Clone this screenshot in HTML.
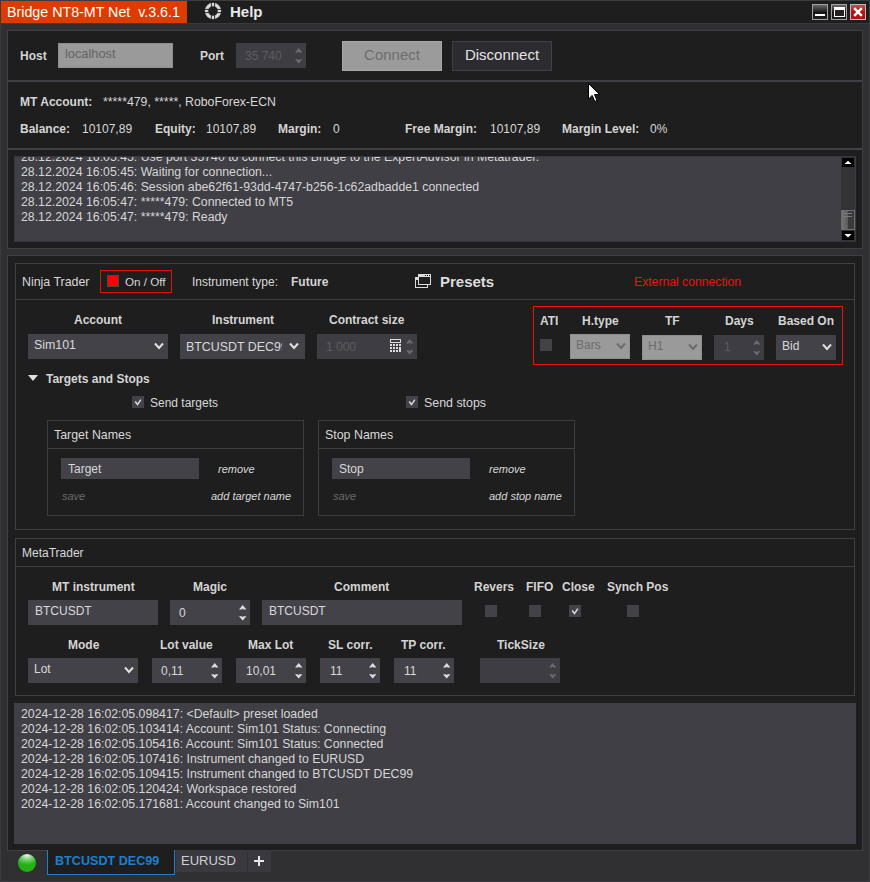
<!DOCTYPE html>
<html><head><meta charset="utf-8">
<style>
*{box-sizing:border-box;margin:0;padding:0}
html,body{width:870px;height:882px;overflow:hidden}
body{position:relative;background:#303033;font-family:"Liberation Sans",sans-serif;font-size:12px;color:#d8d8d8}
.a{position:absolute}
.t{position:absolute;white-space:pre;line-height:14px}
.b{font-weight:bold;color:#d4d4d4}
.box{position:absolute;border:1px solid #404044;background:#1e1e1e}
.hl{position:absolute;height:1px;background:#404044}
.inp{position:absolute;background:#434249}
.dis{position:absolute;background:#9a9a9a;border:1px solid #8e8e8e}
.dspin{position:absolute;background:#3e3d43}
.log{position:absolute;background:#403f45;color:#d6d6d6;font-size:12.3px}
.log .l{height:15px;line-height:15px;white-space:pre}
.cb{position:absolute;width:12px;height:12px;background:#434249}
.it{font-style:italic;font-size:11px}
svg{position:absolute;overflow:visible}
</style></head><body>
<!-- window border -->
<div class="a" style="left:0;top:0;width:870px;height:882px;border:1px solid #3c3c40"></div>
<!-- title bar -->
<div class="a" style="left:1px;top:1px;width:868px;height:22px;background:#1e1e1e"></div>
<div class="a" style="left:1px;top:1px;width:186px;height:22px;background:#dd3b00"></div>
<div class="a" style="left:1px;top:23px;width:868px;height:1px;background:#3a3a3e"></div>
<div class="t" style="left:7px;top:4px;font-size:14.25px;line-height:16px;color:#fff">Bridge NT8-MT Net  v.3.6.1</div>
<svg style="left:204px;top:2px" width="18" height="18" viewBox="0 0 18 18">
 <circle cx="9" cy="9" r="6.5" fill="none" stroke="#d8d8d8" stroke-width="3.4"/>
 <g stroke="#1e1e1e" stroke-width="0.9"><line x1="7.4" y1="0" x2="7.4" y2="5"/><line x1="10.6" y1="0" x2="10.6" y2="5"/><line x1="7.4" y1="13" x2="7.4" y2="18"/><line x1="10.6" y1="13" x2="10.6" y2="18"/><line x1="0" y1="7.4" x2="5" y2="7.4"/><line x1="0" y1="10.6" x2="5" y2="10.6"/><line x1="13" y1="7.4" x2="18" y2="7.4"/><line x1="13" y1="10.6" x2="18" y2="10.6"/></g>
</svg>
<div class="t b" style="left:230px;top:4px;font-size:15px;line-height:16px;color:#e8e8e8">Help</div>
<!-- window controls -->
<div class="a" style="left:812px;top:4px;width:16px;height:16px;border:1px solid #a0a0a0;background:linear-gradient(#6a6a6a,#141212 55%,#221e1f)"><div class="a" style="left:2px;top:9px;width:10px;height:2px;background:#fff"></div></div>
<div class="a" style="left:831px;top:4px;width:16px;height:16px;border:1px solid #a0a0a0;background:linear-gradient(#6a6a6a,#141212 55%,#221e1f)"><div class="a" style="left:2px;top:2px;width:11px;height:10px;border:1px solid #fff;border-top-width:3px;background:#231f20"></div></div>
<div class="a" style="left:850px;top:4px;width:16px;height:16px;border:1px solid #b8b8b8;background:linear-gradient(#c85050,#b01818 45%,#a81414)">
 <svg style="left:1px;top:1px" width="12" height="12" viewBox="0 0 12 12"><path d="M2.2 2.2L9.8 9.8M9.8 2.2L2.2 9.8" stroke="#fff" stroke-width="2.4"/></svg></div>

<!-- panel 1 connection -->
<div class="box" style="left:7px;top:30px;width:856px;height:119px"></div>
<div class="hl" style="left:8px;top:80px;width:854px;height:2px"></div>
<div class="t b" style="left:20px;top:49px">Host</div>
<div class="dis" style="left:58px;top:43px;width:115px;height:25px"></div>
<div class="t" style="left:65px;top:47px;color:#646464;font-size:12.8px">localhost</div>
<div class="t b" style="left:200px;top:49px">Port</div>
<div class="dspin" style="left:236px;top:43px;width:70px;height:25px"></div>
<div class="t" style="left:245px;top:49px;color:#5c5c60">35 740</div>
<svg style="left:294.8px;top:47.6px" width="8" height="16" viewBox="0 0 8 16"><path d="M0 4.4L3.7 0L7.4 4.4H4.5L3.7 3.5L2.9 4.4ZM0 11.3L3.7 15.6L7.4 11.3H4.5L3.7 12.2L2.9 11.3Z" fill="#6c6c6c"/></svg>
<div class="a" style="left:342px;top:41px;width:100px;height:30px;background:#9b9b9b;border:1px solid #a8a8a8"></div>
<div class="t" style="left:342px;top:47px;width:100px;text-align:center;font-size:15px;line-height:16px;color:#6e6e6e">Connect</div>
<div class="a" style="left:452px;top:41px;width:100px;height:30px;background:#2c2c30;border:1px solid #414145"></div>
<div class="t" style="left:452px;top:47px;width:100px;text-align:center;font-size:15px;line-height:16px;color:#e4e4e4">Disconnect</div>

<div class="t b" style="left:20px;top:95px">MT Account:</div>
<div class="t" style="left:103px;top:95px;font-size:12.3px">*****479, *****, RoboForex-ECN</div>
<div class="t b" style="left:20px;top:122px">Balance:</div>
<div class="t" style="left:82px;top:122px">10107,89</div>
<div class="t b" style="left:155px;top:122px">Equity:</div>
<div class="t" style="left:206px;top:122px">10107,89</div>
<div class="t b" style="left:278px;top:122px">Margin:</div>
<div class="t" style="left:333px;top:122px">0</div>
<div class="t b" style="left:405px;top:122px">Free Margin:</div>
<div class="t" style="left:490px;top:122px">10107,89</div>
<div class="t b" style="left:562px;top:122px">Margin Level:</div>
<div class="t" style="left:650px;top:122px">0%</div>

<!-- panel 2 log -->
<div class="box" style="left:7px;top:149px;width:856px;height:100px"></div>
<div class="log" style="left:14px;top:156px;width:842px;height:86px;overflow:hidden;border:1px solid #37363c">
 <div style="margin-top:-7px;padding-left:6px">
 <div class="l">28.12.2024 16:05:45: Use port 35740 to connect this Bridge to the ExpertAdvisor in Metatrader.</div>
 <div class="l">28.12.2024 16:05:45: Waiting for connection...</div>
 <div class="l">28.12.2024 16:05:46: Session abe62f61-93dd-4747-b256-1c62adbadde1 connected</div>
 <div class="l">28.12.2024 16:05:47: *****479: Connected to MT5</div>
 <div class="l">28.12.2024 16:05:47: *****479: Ready</div>
 </div>
</div>
<!-- scrollbar -->
<div class="a" style="left:841px;top:157px;width:15px;height:84px;background:#333336;border-right:1px solid #3c3b41"></div>
<div class="a" style="left:842px;top:158px;width:12px;height:9px;background:#000"></div>
<svg style="left:842px;top:157px" width="12" height="10"><path d="M2.5 7L6 3.8L9.5 7Z" fill="#fff"/></svg>
<div class="a" style="left:841px;top:210px;width:14px;height:20px;border:1px solid #6e6e6e;background:linear-gradient(90deg,#747474,#5a5a5a 50%,#3a3a3a 52%)"></div>
<div class="a" style="left:844px;top:213px;width:8px;height:1px;background:#7a7a7a"></div>
<div class="a" style="left:844px;top:216px;width:8px;height:1px;background:#7a7a7a"></div>
<div class="a" style="left:842px;top:231px;width:12px;height:9px;background:#000"></div>
<svg style="left:842px;top:231px" width="12" height="9"><path d="M2.5 3L6 6.5L9.5 3Z" fill="#fff"/></svg>

<!-- outer panel 3 -->
<div class="box" style="left:7px;top:255px;width:856px;height:596px"></div>
<!-- NT panel -->
<div class="box" style="left:15px;top:263px;width:840px;height:267px"></div>
<div class="hl" style="left:16px;top:299px;width:838px"></div>
<div class="t" style="left:22px;top:275px;font-size:12.4px">Ninja Trader</div>
<div class="a" style="left:100px;top:270px;width:72px;height:23px;border:1px solid #e01010"></div>
<div class="a" style="left:107px;top:275px;width:12px;height:12px;background:#f00;border:1px solid #4a474d"></div>
<div class="t" style="left:125px;top:275px;font-size:11.6px">On / Off</div>
<div class="t" style="left:192px;top:275px">Instrument type:</div>
<div class="t b" style="left:291px;top:275px">Future</div>
<svg style="left:414px;top:273px" width="18" height="16" viewBox="0 0 18 16" shape-rendering="crispEdges"><g fill="#dcdcdc">
 <rect x="1" y="4" width="1" height="11"/><rect x="1" y="14" width="13" height="1"/><rect x="13" y="12" width="1" height="3"/><rect x="1" y="4" width="3" height="3"/>
 <rect x="4" y="1" width="13" height="3"/><rect x="4" y="1" width="1" height="11"/><rect x="16" y="1" width="1" height="11"/><rect x="4" y="11" width="13" height="1"/></g>
 <g fill="#1e1e1e"><rect x="11" y="2" width="1" height="1"/><rect x="13" y="2" width="1" height="1"/><rect x="15" y="2" width="1" height="1"/></g>
</svg>
<div class="t b" style="left:440px;top:274px;font-size:15px;line-height:16px;color:#dcdcdc">Presets</div>
<div class="t" style="left:634px;top:275px;color:#f01010;font-size:12.2px">External connection</div>

<div class="t b" style="left:74px;top:313px">Account</div>
<div class="inp" style="left:28px;top:334px;width:140px;height:25px"></div>
<div class="t" style="left:34px;top:338px;font-size:12.4px">Sim101</div>
<svg style="left:154px;top:342px" width="10" height="8"><path d="M1 1.5L5 6L9 1.5" fill="none" stroke="#e0e0e0" stroke-width="2"/></svg>
<div class="t b" style="left:212px;top:313px">Instrument</div>
<div class="inp" style="left:180px;top:334px;width:125px;height:25px"></div>
<div class="t" style="left:186px;top:340px;width:96px;overflow:hidden;font-size:12.4px">BTCUSDT DEC99</div>
<svg style="left:289px;top:342px" width="10" height="8"><path d="M1 1.5L5 6L9 1.5" fill="none" stroke="#e0e0e0" stroke-width="2"/></svg>
<div class="t b" style="left:329px;top:313px">Contract size</div>
<div class="dspin" style="left:317px;top:334px;width:100px;height:25px"></div>
<div class="t" style="left:326px;top:340px;color:#5c5c60">1 000</div>
<svg style="left:389px;top:338px" width="13" height="15" viewBox="0 0 13 15"><rect x="1.5" y="1.5" width="10" height="3" fill="none" stroke="#dcdcdc"/><g fill="#dcdcdc"><rect x="1" y="6" width="2" height="2"/><rect x="4" y="6" width="2" height="2"/><rect x="7" y="6" width="2" height="2"/><rect x="10" y="6" width="2" height="2"/><rect x="1" y="9" width="2" height="2"/><rect x="4" y="9" width="2" height="2"/><rect x="7" y="9" width="2" height="2"/><rect x="10" y="9" width="2" height="5"/><rect x="1" y="12" width="2" height="2"/><rect x="4" y="12" width="2" height="2"/><rect x="7" y="12" width="2" height="2"/></g></svg>
<svg style="left:405.8px;top:338.6px" width="8" height="16" viewBox="0 0 8 16"><path d="M0 4.4L3.7 0L7.4 4.4H4.5L3.7 3.5L2.9 4.4ZM0 11.3L3.7 15.6L7.4 11.3H4.5L3.7 12.2L2.9 11.3Z" fill="#6c6c6c"/></svg>

<!-- external connection box -->
<div class="a" style="left:533px;top:306px;width:310px;height:59px;border:1px solid #ee1111"></div>
<div class="t b" style="left:540px;top:314px">ATI</div>
<div class="cb" style="left:540px;top:339px"></div>
<div class="t b" style="left:582px;top:314px">H.type</div>
<div class="dis" style="left:570px;top:334px;width:60px;height:25px"></div>
<div class="t" style="left:576px;top:338px;color:#6c6c6c">Bars</div>
<svg style="left:616px;top:342px" width="10" height="8"><path d="M1 1.5L5 6L9 1.5" fill="none" stroke="#6c6c6c" stroke-width="2"/></svg>
<div class="t b" style="left:665px;top:314px">TF</div>
<div class="dis" style="left:642px;top:335px;width:60px;height:25px"></div>
<div class="t" style="left:648px;top:339px;color:#6c6c6c">H1</div>
<svg style="left:688px;top:343px" width="10" height="8"><path d="M1 1.5L5 6L9 1.5" fill="none" stroke="#6c6c6c" stroke-width="2"/></svg>
<div class="t b" style="left:725px;top:314px">Days</div>
<div class="dspin" style="left:714px;top:335px;width:50px;height:25px"></div>
<div class="t" style="left:724px;top:340px;color:#5c5c60">1</div>
<svg style="left:752.8px;top:339.6px" width="8" height="16" viewBox="0 0 8 16"><path d="M0 4.4L3.7 0L7.4 4.4H4.5L3.7 3.5L2.9 4.4ZM0 11.3L3.7 15.6L7.4 11.3H4.5L3.7 12.2L2.9 11.3Z" fill="#6c6c6c"/></svg>
<div class="t b" style="left:778px;top:314px">Based On</div>
<div class="inp" style="left:776px;top:335px;width:60px;height:25px"></div>
<div class="t" style="left:782px;top:339px">Bid</div>
<svg style="left:822px;top:343px" width="10" height="8"><path d="M1 1.5L5 6L9 1.5" fill="none" stroke="#e0e0e0" stroke-width="2"/></svg>

<!-- targets and stops -->
<svg style="left:28px;top:375px" width="10" height="6"><path d="M0 0H10L5 6Z" fill="#e0e0e0"/></svg>
<div class="t b" style="left:46px;top:372px">Targets and Stops</div>
<div class="cb" style="left:132px;top:396px"></div>
<svg style="left:132px;top:396px" width="12" height="12"><path d="M3.2 5.6L5.5 8.4L8.9 3.6" fill="none" stroke="#dadada" stroke-width="1.5"/></svg>
<div class="t" style="left:150px;top:396px">Send targets</div>
<div class="cb" style="left:406px;top:396px"></div>
<svg style="left:406px;top:396px" width="12" height="12"><path d="M3.2 5.6L5.5 8.4L8.9 3.6" fill="none" stroke="#dadada" stroke-width="1.5"/></svg>
<div class="t" style="left:424px;top:396px;font-size:12.4px">Send stops</div>

<div class="box" style="left:47px;top:420px;width:257px;height:96px;border-color:#3c3c40"></div>
<div class="hl" style="left:48px;top:448px;width:255px"></div>
<div class="t" style="left:54px;top:428px;font-size:12.4px">Target Names</div>
<div class="inp" style="left:61px;top:458px;width:138px;height:21px"></div>
<div class="t" style="left:68px;top:462px">Target</div>
<div class="t it" style="left:218px;top:462px">remove</div>
<div class="t it" style="left:62px;top:489px;color:#6a6a6a">save</div>
<div class="t it" style="left:211px;top:489px">add target name</div>

<div class="box" style="left:318px;top:420px;width:257px;height:96px;border-color:#3c3c40"></div>
<div class="hl" style="left:319px;top:448px;width:255px"></div>
<div class="t" style="left:325px;top:428px;font-size:12.4px">Stop Names</div>
<div class="inp" style="left:332px;top:458px;width:138px;height:21px"></div>
<div class="t" style="left:339px;top:462px">Stop</div>
<div class="t it" style="left:489px;top:462px">remove</div>
<div class="t it" style="left:333px;top:489px;color:#6a6a6a">save</div>
<div class="t it" style="left:489px;top:489px">add stop name</div>

<!-- MT panel -->
<div class="box" style="left:15px;top:538px;width:840px;height:158px"></div>
<div class="hl" style="left:16px;top:566px;width:838px"></div>
<div class="t" style="left:22px;top:546px">MetaTrader</div>

<div class="t b" style="left:52px;top:580px">MT instrument</div>
<div class="inp" style="left:28px;top:600px;width:130px;height:25px"></div>
<div class="t" style="left:35px;top:604px">BTCUSDT</div>
<div class="t b" style="left:193px;top:580px">Magic</div>
<div class="inp" style="left:170px;top:600px;width:80px;height:25px"></div>
<div class="t" style="left:179px;top:606px">0</div>
<svg style="left:238.8px;top:604.6px" width="8" height="16" viewBox="0 0 8 16"><path d="M0 4.4L3.7 0L7.4 4.4H4.5L3.7 3.5L2.9 4.4ZM0 11.3L3.7 15.6L7.4 11.3H4.5L3.7 12.2L2.9 11.3Z" fill="#e0e0e0"/></svg>
<div class="t b" style="left:334px;top:580px">Comment</div>
<div class="inp" style="left:262px;top:600px;width:200px;height:25px"></div>
<div class="t" style="left:269px;top:604px">BTCUSDT</div>
<div class="t b" style="left:474px;top:580px">Revers</div>
<div class="cb" style="left:485px;top:605px"></div>
<div class="t b" style="left:526px;top:580px">FIFO</div>
<div class="cb" style="left:529px;top:605px"></div>
<div class="t b" style="left:562px;top:580px">Close</div>
<div class="cb" style="left:569px;top:605px"></div>
<svg style="left:569px;top:605px" width="12" height="12"><path d="M3.2 5.6L5.5 8.4L8.9 3.6" fill="none" stroke="#dadada" stroke-width="1.5"/></svg>
<div class="t b" style="left:607px;top:580px">Synch Pos</div>
<div class="cb" style="left:627px;top:605px"></div>

<div class="t b" style="left:68px;top:638px">Mode</div>
<div class="inp" style="left:28px;top:658px;width:110px;height:25px"></div>
<div class="t" style="left:34px;top:662px">Lot</div>
<svg style="left:124px;top:666px" width="10" height="8"><path d="M1 1.5L5 6L9 1.5" fill="none" stroke="#e0e0e0" stroke-width="2"/></svg>
<div class="t b" style="left:160px;top:638px">Lot value</div>
<div class="inp" style="left:152px;top:658px;width:70px;height:25px"></div>
<div class="t" style="left:161px;top:664px">0,11</div>
<svg style="left:210.8px;top:662.6px" width="8" height="16" viewBox="0 0 8 16"><path d="M0 4.4L3.7 0L7.4 4.4H4.5L3.7 3.5L2.9 4.4ZM0 11.3L3.7 15.6L7.4 11.3H4.5L3.7 12.2L2.9 11.3Z" fill="#e0e0e0"/></svg>
<div class="t b" style="left:248px;top:638px">Max Lot</div>
<div class="inp" style="left:236px;top:658px;width:70px;height:25px"></div>
<div class="t" style="left:246px;top:664px">10,01</div>
<svg style="left:294.8px;top:662.6px" width="8" height="16" viewBox="0 0 8 16"><path d="M0 4.4L3.7 0L7.4 4.4H4.5L3.7 3.5L2.9 4.4ZM0 11.3L3.7 15.6L7.4 11.3H4.5L3.7 12.2L2.9 11.3Z" fill="#e0e0e0"/></svg>
<div class="t b" style="left:328px;top:638px">SL corr.</div>
<div class="inp" style="left:320px;top:658px;width:60px;height:25px"></div>
<div class="t" style="left:330px;top:664px">11</div>
<svg style="left:368.8px;top:662.6px" width="8" height="16" viewBox="0 0 8 16"><path d="M0 4.4L3.7 0L7.4 4.4H4.5L3.7 3.5L2.9 4.4ZM0 11.3L3.7 15.6L7.4 11.3H4.5L3.7 12.2L2.9 11.3Z" fill="#e0e0e0"/></svg>
<div class="t b" style="left:401px;top:638px">TP corr.</div>
<div class="inp" style="left:394px;top:658px;width:60px;height:25px"></div>
<div class="t" style="left:404px;top:664px">11</div>
<svg style="left:442.8px;top:662.6px" width="8" height="16" viewBox="0 0 8 16"><path d="M0 4.4L3.7 0L7.4 4.4H4.5L3.7 3.5L2.9 4.4ZM0 11.3L3.7 15.6L7.4 11.3H4.5L3.7 12.2L2.9 11.3Z" fill="#e0e0e0"/></svg>
<div class="t b" style="left:497px;top:638px">TickSize</div>
<div class="dspin" style="left:480px;top:658px;width:80px;height:25px"></div>
<svg style="left:548.8px;top:662.6px" width="8" height="16" viewBox="0 0 8 16"><path d="M0 4.4L3.7 0L7.4 4.4H4.5L3.7 3.5L2.9 4.4ZM0 11.3L3.7 15.6L7.4 11.3H4.5L3.7 12.2L2.9 11.3Z" fill="#6c6c6c"/></svg>

<!-- bottom log -->
<div class="log" style="left:14px;top:703px;width:842px;height:141px;overflow:hidden">
 <div style="padding:4px 0 0 7px">
 <div class="l">2024-12-28 16:02:05.098417: &lt;Default&gt; preset loaded</div>
 <div class="l">2024-12-28 16:02:05.103414: Account: Sim101 Status: Connecting</div>
 <div class="l">2024-12-28 16:02:05.105416: Account: Sim101 Status: Connected</div>
 <div class="l">2024-12-28 16:02:05.107416: Instrument changed to EURUSD</div>
 <div class="l">2024-12-28 16:02:05.109415: Instrument changed to BTCUSDT DEC99</div>
 <div class="l">2024-12-28 16:02:05.120424: Workspace restored</div>
 <div class="l">2024-12-28 16:02:05.171681: Account changed to Sim101</div>
 </div>
</div>

<!-- tabs -->
<div class="a" style="left:18px;top:854px;width:18px;height:18px;border-radius:50%;background:radial-gradient(ellipse 70% 55% at 50% 5%,rgba(255,255,255,.95) 0,rgba(255,255,255,.45) 45%,rgba(255,255,255,0) 100%),#22b014"></div>
<div class="a" style="left:47px;top:850px;width:128px;height:25px;background:#1e1e1e;border:1px solid #1a7fd0;border-top:none"></div>
<div class="t" style="left:55px;top:854px;color:#1a80d0;font-weight:bold;font-size:12.6px">BTCUSDT DEC99</div>
<div class="a" style="left:176px;top:850px;width:71px;height:22px;background:#3a393f"></div>
<div class="t" style="left:181px;top:854px;font-size:13px;color:#d0d0d0">EURUSD</div>
<div class="a" style="left:248px;top:850px;width:23px;height:22px;background:#3a393f"></div>
<svg style="left:253px;top:855px" width="12" height="12"><path d="M6 1V11M1 6H11" stroke="#e8e8e8" stroke-width="2"/></svg>

<!-- cursor -->
<svg style="left:588px;top:83px" width="14" height="20" viewBox="0 0 14 20"><path d="M0.5 0.5V16L4.2 12.4L6.8 18.5L9 17.5L6.5 11.6H11.5Z" fill="#fff" stroke="#000" stroke-width="1"/></svg>
</body></html>
